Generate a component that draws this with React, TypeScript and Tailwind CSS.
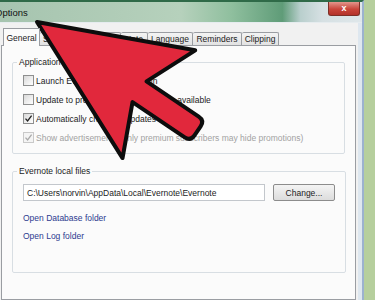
import React from 'react'

const tabs = [
  { label: 'General', w: 'w-[37px]', active: true },
  { label: 'Sync', w: 'w-[26px]' },
  { label: 'Shortcut Keys', w: 'w-[55px]' },
  { label: 'Note', w: 'w-[27px]' },
  { label: 'Language', w: 'w-[45px]' },
  { label: 'Reminders', w: 'w-[49px]' },
  { label: 'Clipping', w: 'w-[37px]' },
]

const options = [
  { label: 'Launch Evernote Helper at login', checked: false },
  { label: 'Update to pre-release versions when available', checked: false },
  { label: 'Automatically check for updates', checked: true },
  { label: 'Show advertisements (only premium subscribers may hide promotions)', checked: true, disabled: true },
]

function Checkbox({ checked, disabled }: { checked?: boolean; disabled?: boolean }) {
  return (
    <span
      className={
        disabled
          ? 'flex h-[11px] w-[11px] shrink-0 items-center justify-center border border-[#c9c9c9] bg-[#f4f4f4]'
          : 'flex h-[11px] w-[11px] shrink-0 items-center justify-center border border-[#8e8f8f] bg-[linear-gradient(135deg,#d9d9d9,#ffffff)]'
      }
    >
      {checked && (
        <svg width="9" height="9" viewBox="0 0 9 9">
          <path
            d="M1.5 4.6 L3.6 7 L7.6 1.6"
            fill="none"
            stroke={disabled ? '#a9a9a9' : '#222'}
            strokeWidth="1.3"
          />
        </svg>
      )}
    </span>
  )
}

// big red callout arrow laid over the dialog
function Arrow() {
  return (
    <svg className="pointer-events-none absolute left-0 top-0" width="375" height="300" viewBox="0 0 375 300">
      <g transform="translate(37 22) rotate(34)">
        <path
          d="M0 0 L147 -65 L124 -12 L187 -12 Q194 -12 194 -5 L194 6 Q194 13 187 13 L124 13 L147 65 Z"
          fill="#e1283c"
          stroke="#0d0d0d"
          strokeWidth="4"
          strokeLinejoin="round"
        />
      </g>
    </svg>
  )
}

export default function App() {
  return (
    <div className="relative flex h-[300px] w-[375px] overflow-hidden bg-[#b6cf9d] font-['Liberation_Sans',Arial,sans-serif] text-[8.5px] leading-[12px] text-[#1c1c1c]">
      <div className="flex h-full w-[364px] flex-col border-r-2 border-t-2 border-[#9cb2cf] border-t-[#2f6a48]">
        {/* title bar */}
        <div className="flex h-[21px] shrink-0 items-start justify-between border-b border-[#e6ecef] bg-[linear-gradient(to_right,#a6c4af_0%,#b6d1bc_50%,#8fbf9e_64%,#5f9c78_78%,#b9cfcd_83%,#d6e0e3_89%,#dfe7ea_100%)]">
          <span className="ml-[-5px] mt-[5px] text-[9.5px] leading-[12px] text-[#111]">Options</span>
          <span className="mr-[2px] flex h-[14px] w-[32px] items-center justify-center rounded-b-[3px] border border-t-0 border-[#7d2f27] bg-[linear-gradient(#e3968c,#c9453a_55%,#b3322a)] text-[9px] font-bold leading-none text-white">
            x
          </span>
        </div>

        <div className="flex flex-1">
          {/* client area */}
          <div className="flex w-[358px] flex-col bg-[#f1f1f1] pl-[1px] pr-[2px]">
            <div className="flex h-[22px] items-end pl-[2px]">
              {tabs.map((t) =>
                t.active ? (
                  <div
                    key={t.label}
                    className={`${t.w} relative z-10 mb-[-1px] flex h-[18px] items-start justify-center border border-b-0 border-[#9a9da2] bg-[#fbfbfb] pt-[3px]`}
                  >
                    {t.label}
                  </div>
                ) : (
                  <div
                    key={t.label}
                    className={`${t.w} flex h-[13px] items-center justify-center overflow-hidden whitespace-nowrap rounded-t-[2px] border border-b-0 border-l-0 border-[#9a9da2] bg-[linear-gradient(#f4f4f4,#e2e2e2)]`}
                  >
                    {t.label}
                  </div>
                ),
              )}
            </div>

            {/* tab panel */}
            <div className="flex flex-1 flex-col border border-[#9a9da2] bg-[#fbfbfb] px-[10px]">
              <fieldset className="mt-[10px] rounded-[2px] border border-[#d8dee3] px-[10px] pb-[6px] pt-[3px]">
                <legend className="ml-[-6px] px-[2px] leading-[12px]">Application</legend>
                {options.map((o) => (
                  <div key={o.label} className="flex h-[19px] items-center gap-[2px] whitespace-nowrap">
                    <Checkbox checked={o.checked} disabled={o.disabled} />
                    <span className={o.disabled ? 'text-[#a2a2a2]' : ''}>{o.label}</span>
                  </div>
                ))}
              </fieldset>

              <fieldset className="mt-[11px] rounded-[2px] border border-[#d8dee3] px-[10px] pb-[30px]">
                <legend className="ml-[-6px] px-[2px] leading-[12px]">Evernote local files</legend>
                <div className="mt-[7px] flex gap-[8px]">
                  <div className="flex h-[17px] w-[242px] items-center border border-[#c3c7cc] bg-white pl-[3px] whitespace-nowrap">
                    C:\Users\norvin\AppData\Local\Evernote\Evernote
                  </div>
                  <div className="flex h-[17px] w-[62px] items-center justify-center rounded-[2px] border border-[#8c8c8c] bg-[linear-gradient(#f4f4f4,#dcdcdc)]">
                    Change...
                  </div>
                </div>
                <div className="mt-[11px] text-[#2b3a8f]">Open Database folder</div>
                <div className="mt-[6px] text-[#2b3a8f]">Open Log folder</div>
              </fieldset>
            </div>
          </div>
          {/* aero frame edge */}
          <div className="flex-1 bg-[#dee7ef]" />
        </div>
      </div>
      <Arrow />
    </div>
  )
}
